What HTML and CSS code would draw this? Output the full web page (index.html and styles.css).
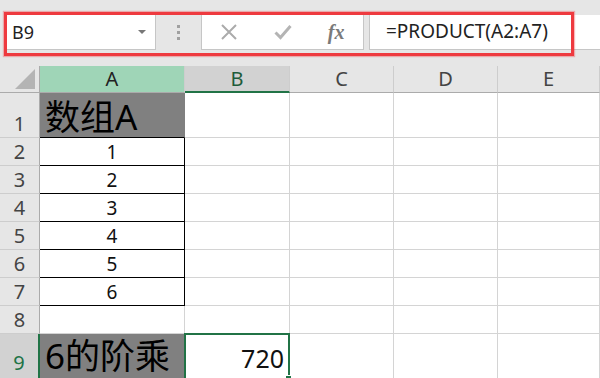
FILE: index.html
```html
<!DOCTYPE html>
<html lang="zh-CN">
<head>
  <meta charset="UTF-8">
  <title>PRODUCT</title>
  <link rel="stylesheet" href="styles.css">
</head>
<body>

  <div class="app">
    <div class="toolbar">
      <div class="namebox">
        <span>B9</span>
        <span class="caret"></span>
      </div>
      <div class="grip"><i></i><i></i><i></i></div>
      <div class="actions">
        <div class="slot">
          <svg width="16" height="16" viewBox="0 0 16 16"><path d="M1 1L15 15M15 1L1 15" stroke="#ababab" stroke-width="2" fill="none"/></svg>
        </div>
        <div class="slot">
          <svg width="18" height="16" viewBox="0 0 18 16"><path d="M1.5 8.5L6.5 13.5L16.5 2" stroke="#b4b4b4" stroke-width="3" fill="none"/></svg>
        </div>
        <div class="slot"><span class="fx">fx</span></div>
      </div>
      <div class="formula">=PRODUCT(A2:A7)</div>
      <div class="highlight"></div>
    </div>

    <div class="sheet">
      <!-- column headers -->
      <div class="corner"></div>
      <div class="col-head col-a">A</div>
      <div class="col-head col-sel">B</div>
      <div class="col-head">C</div>
      <div class="col-head">D</div>
      <div class="col-head">E</div>

      <!-- row 1 -->
      <div class="row-head">1</div>
      <div class="cell dark big">数组A</div>
      <div class="cell"></div><div class="cell"></div><div class="cell"></div><div class="cell"></div>

      <div class="row-head">2</div>
      <div class="cell boxed">1</div>
      <div class="cell"></div><div class="cell"></div><div class="cell"></div><div class="cell"></div>

      <div class="row-head">3</div>
      <div class="cell boxed">2</div>
      <div class="cell"></div><div class="cell"></div><div class="cell"></div><div class="cell"></div>

      <div class="row-head">4</div>
      <div class="cell boxed">3</div>
      <div class="cell"></div><div class="cell"></div><div class="cell"></div><div class="cell"></div>

      <div class="row-head">5</div>
      <div class="cell boxed">4</div>
      <div class="cell"></div><div class="cell"></div><div class="cell"></div><div class="cell"></div>

      <div class="row-head">6</div>
      <div class="cell boxed">5</div>
      <div class="cell"></div><div class="cell"></div><div class="cell"></div><div class="cell"></div>

      <div class="row-head">7</div>
      <div class="cell boxed">6</div>
      <div class="cell"></div><div class="cell"></div><div class="cell"></div><div class="cell"></div>

      <div class="row-head">8</div>
      <div class="cell"></div>
      <div class="cell"></div><div class="cell"></div><div class="cell"></div><div class="cell"></div>

      <div class="row-head row-sel">9</div>
      <div class="cell dark big last">6的阶乘</div>
      <div class="cell active">720<span class="handle"></span></div>
      <div class="cell"></div><div class="cell"></div><div class="cell"></div>
    </div>
  </div>

</body>
</html>
```

FILE: styles.css
```css
body {
  margin: 0;
  padding: 0;
  background-color: #e6e6e6;
  font-family: "Noto Sans", "Noto Sans CJK SC", sans-serif;
  overflow: hidden;
}

.app {
  width: 600px;
  height: 378px;
  overflow: hidden;
}

/* formula bar */

.toolbar {
  position: relative;
  height: 66px;
  padding-top: 15px;
  box-sizing: border-box;
  display: flex;
  align-items: flex-start;
}

.namebox,
.actions,
.formula {
  height: 35px;
  background-color: #fff;
  border-bottom: 1px solid #c6c6c6;
  box-sizing: border-box;
}

.namebox {
  margin-left: 7px;
  width: 149px;
  border-right: 1px solid #c6c6c6;
  display: flex;
  align-items: center;
  justify-content: space-between;
  padding: 0 9px 0 5px;
  font-size: 18px;
  color: #222;
}

.caret {
  width: 0;
  height: 0;
  border-left: 4px solid transparent;
  border-right: 4px solid transparent;
  border-top: 4px solid #777;
}

.grip {
  width: 45px;
  height: 35px;
  display: flex;
  flex-direction: column;
  align-items: center;
  justify-content: center;
  gap: 3px;
}

.grip i {
  display: block;
  width: 3px;
  height: 3px;
  background-color: #a0a0a0;
}

.actions {
  width: 163px;
  border-left: 1px solid #c6c6c6;
  border-right: 1px solid #c6c6c6;
  display: flex;
}

.slot {
  width: 54px;
  display: flex;
  align-items: center;
  justify-content: center;
}

.fx {
  font-family: "Liberation Serif", "DejaVu Serif", serif;
  font-style: italic;
  font-weight: bold;
  font-size: 20px;
  color: #7a7a7a;
}

.formula {
  flex: 1;
  margin-left: 5px;
  border-left: 1px solid #c6c6c6;
  padding-left: 16px;
  font-size: 19px;
  line-height: 33px;
  color: #222;
}

.highlight {
  position: absolute;
  left: 4px;
  top: 12px;
  width: 570px;
  height: 44px;
  border: 3px solid #ee3a3f;
  box-sizing: border-box;
  box-shadow: 0 0 1px 1px rgba(238, 58, 63, 0.35);
}

/* sheet grid */

.sheet {
  display: grid;
  grid-template-columns: 40px 145px 105px 104px 104px 102px;
  grid-template-rows: 27px 45px repeat(7, 28px) 46px;
  background-color: #fff;
}

.corner,
.col-head,
.row-head {
  background-color: #e6e6e6;
  color: #444;
  font-size: 20px;
  box-sizing: border-box;
}

.corner {
  border-right: 1px solid #ababab;
  border-bottom: 1px solid #ababab;
  display: flex;
  justify-content: flex-end;
  align-items: flex-end;
  padding: 0 4px 3px 0;
}

.corner:after {
  content: "";
  width: 20px;
  height: 20px;
  background-color: #b4b4b4;
  clip-path: polygon(100% 0, 100% 100%, 0 100%);
}

.col-head {
  border-right: 1px solid #cdcdcd;
  border-bottom: 1px solid #ababab;
  display: flex;
  align-items: center;
  justify-content: center;
  line-height: 1;
}

.col-a {
  background-color: #9fd5b7;
  color: #222;
}

.col-sel {
  background-color: #d2d2d2;
  color: #1e5c3a;
  border-bottom: 2px solid #217346;
}

.row-head {
  border-right: 1px solid #ababab;
  border-bottom: 1px solid #cdcdcd;
  display: flex;
  align-items: flex-end;
  justify-content: center;
  line-height: 1;
  padding-bottom: 3px;
}

.row-sel {
  background-color: #d2d2d2;
  color: #217346;
  border-right: 2px solid #217346;
  padding-bottom: 6px;
}

.cell {
  border-right: 1px solid #d4d4d4;
  border-bottom: 1px solid #d4d4d4;
  box-sizing: border-box;
  display: flex;
  align-items: flex-end;
  justify-content: center;
  font-size: 19px;
  line-height: 1;
  padding-bottom: 3px;
  color: #111;
}

.boxed {
  border-right-color: #000;
  border-bottom-color: #000;
}

.dark {
  background-color: #808080;
  justify-content: flex-start;
  border-right-color: #808080;
  border-bottom-color: #000;
  padding-left: 5px;
}

.big {
  font-size: 35px;
  padding-bottom: 3px;
  color: #000;
}

.last {
  padding-bottom: 6px;
}

.active {
  position: relative;
  border: 2px solid #217346;
  margin-left: -1px;
  margin-top: -1px;
  justify-content: flex-end;
  padding-right: 4px;
  font-size: 25px;
  padding-bottom: 7px;
}

.handle {
  position: absolute;
  right: -4px;
  bottom: -4px;
  width: 5px;
  height: 5px;
  background-color: #217346;
  border: 1px solid #fff;
}
```
